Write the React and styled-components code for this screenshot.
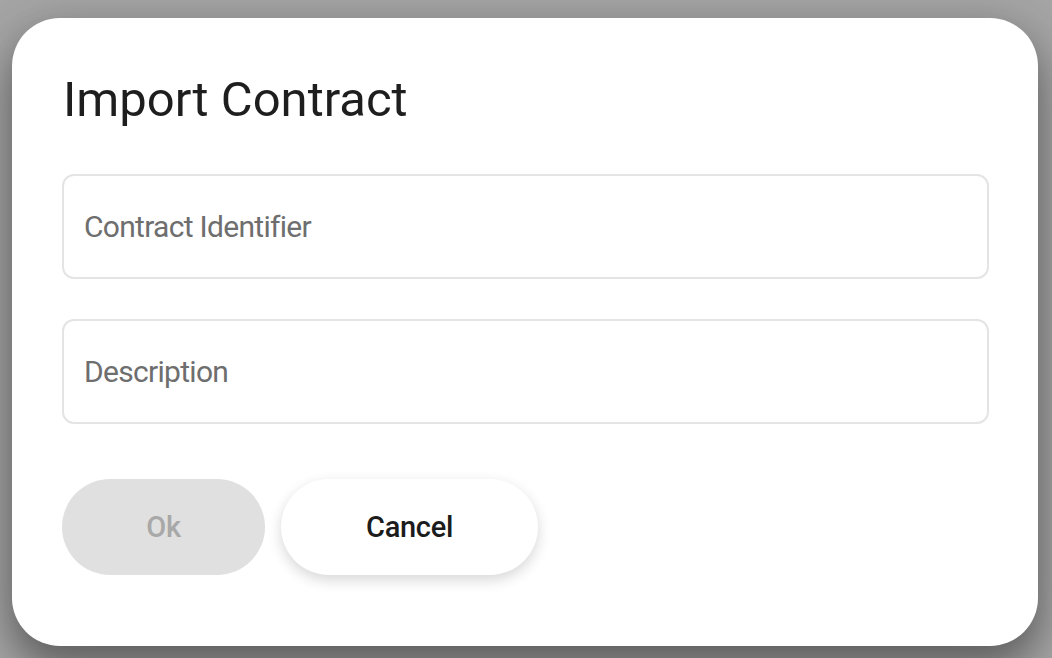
import React from 'react';
import styled, { createGlobalStyle } from 'styled-components';

const GlobalStyle = createGlobalStyle`
  html, body {
    margin: 0;
    padding: 0;
    background: #a4a4a4;
  }
  * {
    box-sizing: border-box;
  }
`;

const Backdrop = styled.div`
  width: 1052px;
  height: 658px;
  padding: 18px 14px 12px 12px;
  background: #a4a4a4;
  font-family: Roboto, 'Liberation Sans', sans-serif;
`;

const Dialog = styled.div`
  height: 100%;
  background: #ffffff;
  border-radius: 48px;
  padding: 53px 49px 0 50px;
  display: flex;
  flex-direction: column;
  box-shadow: 0 24px 38px rgba(0, 0, 0, 0.3), 0 9px 46px rgba(0, 0, 0, 0.2);
`;

const Title = styled.h2`
  margin: 0 0 45px 1px;
  font-size: 49px;
  font-weight: 400;
  line-height: 58px;
  color: #1e1e1e;
`;

const Fields = styled.div`
  display: flex;
  flex-direction: column;
  gap: 40px;
`;

const Field = styled.input`
  width: 100%;
  height: 105px;
  border: 2px solid #e4e4e4;
  border-radius: 12px;
  padding: 0 20px;
  font-family: inherit;
  font-size: 30px;
  letter-spacing: -0.7px;
  color: #222;
  outline: none;
  background: #fff;

  &::placeholder {
    color: #6e6e6e;
  }
`;

const Actions = styled.div`
  display: flex;
  gap: 16px;
  margin-top: 55px;
`;

const Button = styled.button`
  height: 96px;
  width: ${(p) => p.$width}px;
  border: none;
  border-radius: 48px;
  font-family: inherit;
  font-size: 29px;
  letter-spacing: -0.3px;
  font-weight: 500;
  background: ${(p) => (p.$disabled ? '#e0e0e0' : '#ffffff')};
  color: ${(p) => (p.$disabled ? '#a8a8a8' : '#1c1c1c')};
  box-shadow: ${(p) => (p.$disabled ? 'none' : '0 5px 14px rgba(0, 0, 0, 0.16)')};
  cursor: ${(p) => (p.$disabled ? 'default' : 'pointer')};
`;

const App = () => {
  return (
    <>
      <GlobalStyle />
      <Backdrop>
        <Dialog>
          <Title>Import Contract</Title>
          <Fields>
            <Field placeholder="Contract Identifier" />
            <Field placeholder="Description" />
          </Fields>
          <Actions>
            <Button $disabled $width={203}>Ok</Button>
            <Button $width={257}>Cancel</Button>
          </Actions>
        </Dialog>
      </Backdrop>
    </>
  );
};

export default App;
